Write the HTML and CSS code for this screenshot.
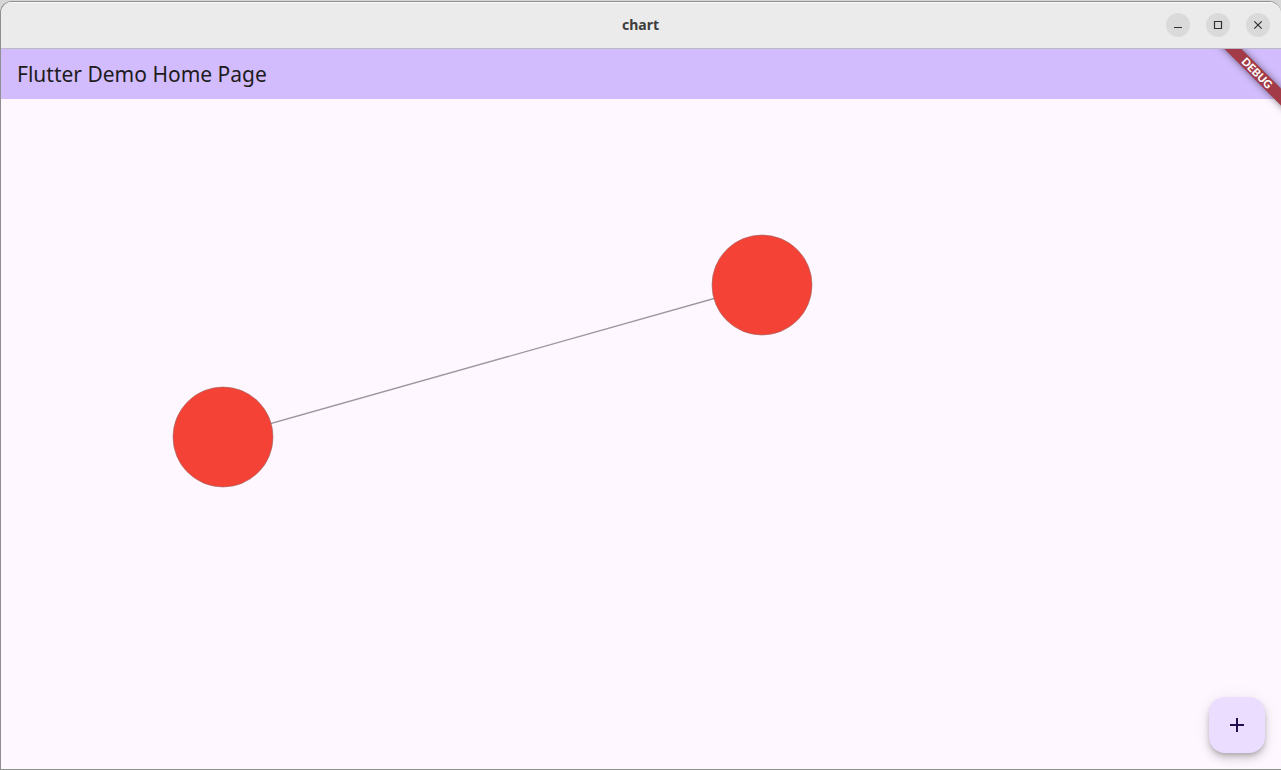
FILE: index.html
```
<!DOCTYPE html>
<html lang="en">
<head>
<meta charset="utf-8">
<meta name="viewport" content="width=device-width, initial-scale=1">
<title>chart</title>
<link rel="stylesheet" href="styles.css">
</head>
<body>
<div class="window">
  <header class="titlebar">
    <h1 class="window-title">chart</h1>
    <div class="window-controls">
      <button class="window-button" type="button" aria-label="Minimize">
        <svg viewBox="0 0 24 24" aria-hidden="true"><path d="M8 14.5h8"/></svg>
      </button>
      <button class="window-button" type="button" aria-label="Maximize">
        <svg viewBox="0 0 24 24" aria-hidden="true"><path d="M8.5 8.5h7v7h-7z"/></svg>
      </button>
      <button class="window-button" type="button" aria-label="Close">
        <svg viewBox="0 0 24 24" aria-hidden="true"><path d="M8.3 8.3l7.4 7.4M15.7 8.3l-7.4 7.4"/></svg>
      </button>
    </div>
  </header>
  <div class="app">
    <div class="appbar"><h2 class="appbar-title">Flutter Demo Home Page</h2></div>
    <main class="canvas">
      <svg class="graph" role="img" aria-label="Two connected nodes">
        <line class="edge" x1="222" y1="338" x2="761" y2="186"/>
        <circle class="node" cx="222" cy="338" r="50"/>
        <circle class="node" cx="761" cy="186" r="50"/>
      </svg>
    </main>
    <button class="fab" type="button" aria-label="Increment">
      <svg viewBox="0 0 24 24" aria-hidden="true"><path d="M19 13h-6v6h-2v-6H5v-2h6V5h2v6h6z"/></svg>
    </button>
    <div class="debug-banner">DEBUG</div>
  </div>
</div>
</body>
</html>
```
FILE: styles.css
```
* {
  box-sizing: border-box;
}

body {
  margin: 0;
  padding-top: 1px;
  background: #d6d6d6;
  font-family: "Noto Sans", "Open Sans", sans-serif;
}

.window {
  display: flex;
  flex-direction: column;
  height: calc(100vh - 1px);
  border: 1px solid #8f8f8f;
  border-right: 0;
  border-radius: 12px 12px 0 0;
  overflow: hidden;
}

.titlebar {
  display: grid;
  grid-template-columns: 1fr auto 1fr;
  align-items: center;
  height: 47px;
  padding-right: 11px;
  background: #ebebeb;
  border-bottom: 1px solid #bdb8c6;
  box-shadow: inset 0 1px #fafafa;
}

.window-title {
  grid-column: 2;
  margin: 0;
  padding-left: 10px;
  color: #3d3d3d;
  font-size: 14px;
  font-weight: 700;
  line-height: 20px;
}

.window-controls {
  display: flex;
  justify-content: flex-end;
  gap: 16px;
}

.window-button {
  width: 24px;
  height: 24px;
  padding: 0;
  border: 0;
  border-radius: 50%;
  background: #dadada;
}

.window-button svg {
  display: block;
  fill: none;
  stroke: #303030;
  stroke-width: 1.2;
}

.app {
  position: relative;
  display: flex;
  flex: 1;
  flex-direction: column;
  overflow: hidden;
  background: #fef7ff;
}

.appbar {
  display: flex;
  align-items: center;
  height: 50px;
  padding: 0 16px;
  background: #d2bcfd;
}

.appbar-title {
  margin: 0;
  color: #1d1b20;
  font-size: 21px;
  font-weight: 400;
  line-height: 28px;
}

.canvas {
  display: flex;
  flex: 1;
}

.graph {
  flex: 1;
}

.edge {
  stroke: #9b979c;
  stroke-width: 1.4;
}

.node {
  fill: #f44336;
  stroke: #9b6866;
  stroke-width: 0.6;
}

.fab {
  position: absolute;
  right: 16px;
  bottom: 16px;
  display: grid;
  place-items: center;
  width: 56px;
  height: 56px;
  padding: 0;
  border: 0;
  border-radius: 16px;
  background: #eaddff;
  box-shadow: 0 3px 5px -1px rgba(0, 0, 0, 0.2), 0 6px 10px rgba(0, 0, 0, 0.14), 0 1px 18px rgba(0, 0, 0, 0.06);
}

.fab svg {
  width: 24px;
  height: 24px;
  fill: #21104f;
}

.debug-banner {
  position: absolute;
  top: 18px;
  right: -26px;
  width: 100px;
  height: 12px;
  background: #a23a48;
  box-shadow: 0 0 7px rgba(0, 0, 0, 0.5);
  color: #fff;
  font-family: Lato, "Noto Sans", sans-serif;
  font-size: 11px;
  font-weight: 900;
  line-height: 12px;
  text-align: center;
  transform: rotate(45deg);
}
```
